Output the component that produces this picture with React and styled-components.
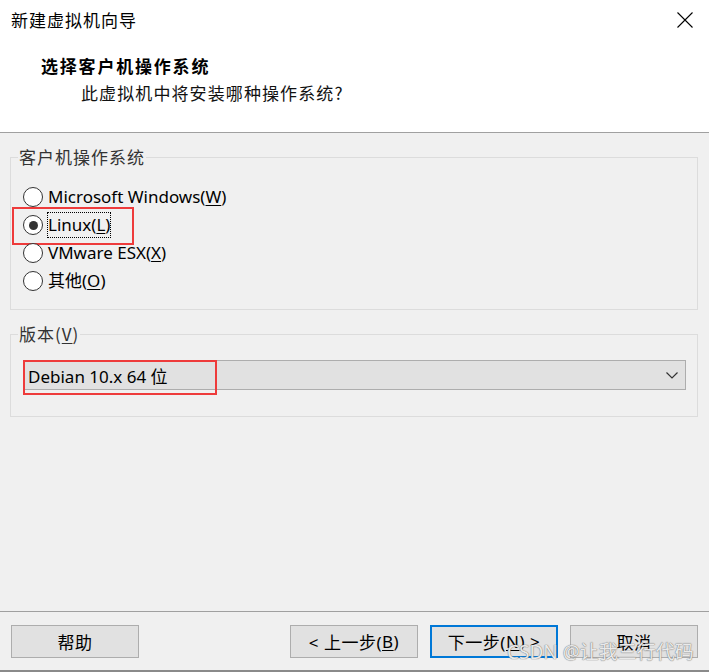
import React from "react";
import styled, { createGlobalStyle } from "styled-components";

const GlobalStyle = createGlobalStyle`
  html, body { margin: 0; padding: 0; background: #f0f0f0; }
  body { font-family: "Noto Sans", "Noto Sans CJK SC", sans-serif; color: #000; }
  * { box-sizing: border-box; }
`;

const Window = styled.div`
  width: 709px;
  height: 672px;
  display: flex;
  flex-direction: column;
  background: #f0f0f0;
  position: relative;
  overflow: hidden;
`;

const Header = styled.div`
  height: 133px;
  background: #fff;
  border-bottom: 1px solid #a0a0a0;
  display: flex;
  flex-direction: column;
`;

const TitleRow = styled.div`
  height: 40px;
  display: flex;
  align-items: center;
  justify-content: space-between;
  padding: 0 16px 0 11px;
`;

const Title = styled.div`
  font-family: "Noto Sans CJK SC", sans-serif;
  font-size: 17px;
  line-height: 24px;
  letter-spacing: 1px;
`;

const Heading = styled.div`
  margin: 14px 0 0 41px;
  font-family: "Noto Sans CJK SC", sans-serif;
  font-weight: 700;
  font-size: 17px;
  line-height: 24px;
  letter-spacing: 1.8px;
`;

const SubHeading = styled.div`
  margin: 3px 0 0 81px;
  font-family: "Noto Sans CJK SC", sans-serif;
  font-size: 17px;
  line-height: 24px;
  letter-spacing: 1.1px;
  color: #111;
`;

const Body = styled.div`
  flex: 1;
  display: flex;
  flex-direction: column;
  gap: 14px;
  padding: 14px 11px 0 10px;
`;

const Group = styled.fieldset`
  margin: 0;
  border: 1px solid #dcdcdc;
  padding: ${(p) => p.$pad};
  min-width: 0;
`;

const Legend = styled.legend`
  padding: 0 1px;
  margin-left: -5px;
  font-family: "Noto Sans CJK SC", sans-serif;
  font-size: 17px;
  line-height: 20px;
  color: #333;
  letter-spacing: 1px;
`;

const RadioRow = styled.label`
  position: relative;
  height: 28px;
  display: flex;
  align-items: center;
  gap: 5px;
  font-size: 17px;
  ${(p) =>
    p.$marked &&
    `
    &::after {
      content: "";
      position: absolute;
      left: -11px;
      top: -4px;
      width: 118px;
      height: 34px;
      border: 2px solid #ee3b3b;
      pointer-events: none;
    }
  `}
`;

const Circle = styled.span`
  width: 20px;
  height: 20px;
  border-radius: 50%;
  border: 1px solid #333;
  background: #fff;
  display: flex;
  align-items: center;
  justify-content: center;
  flex-shrink: 0;
  &::before {
    content: "";
    width: 9px;
    height: 9px;
    border-radius: 50%;
    background: ${(p) => (p.$checked ? "#333" : "transparent")};
  }
`;

const LabelText = styled.span`
  padding: 1px 0px;
  line-height: 22px;
  border: 1px dotted ${(p) => (p.$focus ? "#000" : "transparent")};
  margin-left: -1px;
`;

const U = styled.span`
  text-decoration: underline;
  text-underline-offset: 2px;
`;

const Select = styled.div`
  position: relative;
  height: 30px;
  background: #e1e1e1;
  border: 1px solid #adadad;
  display: flex;
  align-items: center;
  justify-content: space-between;
  padding: 0 7px 0 4px;
  font-size: 17px;
  &::after {
    content: "";
    position: absolute;
    left: -1px;
    top: -1px;
    width: 190px;
    height: 31px;
    border: 2px solid #ee3b3b;
    pointer-events: none;
  }
`;

const Footer = styled.div`
  height: 61px;
  border-top: 1px solid #a0a0a0;
  border-bottom: 2px solid #8a8a8a;
  padding: 13px 11px 12px 11px;
  display: flex;
  align-items: flex-start;
  justify-content: space-between;
`;

const ButtonGroup = styled.div`
  display: flex;
  gap: 12px;
`;

const Button = styled.button`
  width: 128px;
  height: 33px;
  background: #e1e1e1;
  border: ${(p) => (p.$default ? "2px solid #0078d7" : "1px solid #adadad")};
  font-family: "Noto Sans", "Noto Sans CJK SC", sans-serif;
  font-size: 17px;
  color: #000;
  padding: 0;
  margin: 0;
  display: flex;
  align-items: center;
  justify-content: center;
  letter-spacing: 0.5px;
`;

const Watermark = styled.div`
  position: absolute;
  left: 507px;
  top: 640px;
  font-family: "Noto Sans", "Noto Sans CJK SC", sans-serif;
  font-size: 19px;
  line-height: 24px;
  color: rgba(255, 255, 255, 0.85);
  text-shadow: 0 0 1px #777, 0 0 1px #777;
  pointer-events: none;
`;

const CloseIcon = () => (
  <svg width="16" height="16" viewBox="0 0 16 16">
    <path d="M0.5 0.5 L15.5 15.5 M15.5 0.5 L0.5 15.5" stroke="#000" strokeWidth="1.1" fill="none" />
  </svg>
);

const Chevron = () => (
  <svg width="12" height="7" viewBox="0 0 12 7">
    <path d="M0.5 0.5 L6 6 L11.5 0.5" stroke="#333" strokeWidth="1.2" fill="none" />
  </svg>
);

const options = [
  { text: "Microsoft Windows(", key: "W" },
  { text: "Linux(", key: "L", checked: true },
  { text: "VMware ESX(", key: "X" },
  { text: "其他(", key: "O" },
];

export default function App() {
  return (
    <>
      <GlobalStyle />
      <Window>
        <Header>
          <TitleRow>
            <Title>新建虚拟机向导</Title>
            <CloseIcon />
          </TitleRow>
          <Heading>选择客户机操作系统</Heading>
          <SubHeading>此虚拟机中将安装哪种操作系统?</SubHeading>
        </Header>
        <Body>
          <Group $pad="16px 12px 14px 12px">
            <Legend>客户机操作系统</Legend>
            {options.map((o) => (
              <RadioRow key={o.key} $marked={o.checked}>
                <Circle $checked={o.checked} />
                <LabelText $focus={o.checked}>
                  {o.text}
                  <U>{o.key}</U>)
                </LabelText>
              </RadioRow>
            ))}
          </Group>
          <Group $pad="16px 11px 26px 12px">
            <Legend>
              版本(<U>V</U>)
            </Legend>
            <Select>
              <span>Debian 10.x 64 位</span>
              <Chevron />
            </Select>
          </Group>
        </Body>
        <Footer>
          <Button>帮助</Button>
          <ButtonGroup>
            <Button>
              &lt; 上一步(<U>B</U>)
            </Button>
            <Button $default>
              下一步(<U>N</U>) &gt;
            </Button>
            <Button>取消</Button>
          </ButtonGroup>
        </Footer>
        <Watermark>CSDN @让我三行代码</Watermark>
      </Window>
    </>
  );
}
